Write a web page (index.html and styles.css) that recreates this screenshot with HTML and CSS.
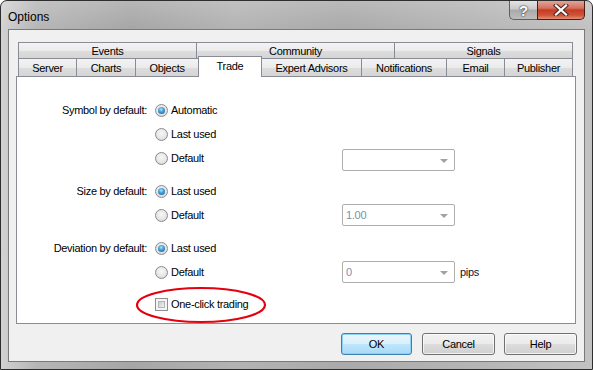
FILE: index.html
```html
<!DOCTYPE html>
<html>
<head>
<meta charset="utf-8">
<link rel="stylesheet" href="styles.css">
</head>
<body>
<div class="window">
  <div class="titlebar">
    <span class="title">Options</span>
    <div class="caption-btns">
      <div class="cbtn help">?</div>
      <div class="cbtn close">
        <svg width="16" height="12" viewBox="0 0 16 12">
          <path d="M3 1.5 L13 10.5 M13 1.5 L3 10.5" stroke="#4a2a25" stroke-width="4.2" stroke-linecap="square"/>
          <path d="M3 1.5 L13 10.5 M13 1.5 L3 10.5" stroke="#ffffff" stroke-width="2.2" stroke-linecap="square"/>
        </svg>
      </div>
    </div>
  </div>
  <div class="client">
    <div class="tabs">
      <div class="tabrow row1">
        <div class="tab first w-events">Events</div>
        <div class="tab w-community">Community</div>
        <div class="tab w-signals">Signals</div>
      </div>
      <div class="tabrow row2">
        <div class="tab first w-server">Server</div>
        <div class="tab w-charts">Charts</div>
        <div class="tab w-objects">Objects</div>
        <div class="tab selected w-trade">Trade</div>
        <div class="tab w-expert">Expert Advisors</div>
        <div class="tab w-notif">Notifications</div>
        <div class="tab w-email">Email</div>
        <div class="tab w-publisher">Publisher</div>
      </div>
      <div class="panel">
        <div class="group">
          <div class="lbl">Symbol by default:</div>
          <div class="opt"><span class="radio checked"></span><span>Automatic</span></div>
          <div></div><div></div>
          <div></div>
          <div class="opt"><span class="radio"></span><span>Last used</span></div>
          <div></div><div></div>
          <div></div>
          <div class="opt"><span class="radio"></span><span>Default</span></div>
          <div class="combo combo-low"><span class="combo-text"></span><span class="arrow"></span></div>
          <div></div>
        </div>
        <div class="group">
          <div class="lbl">Size by default:</div>
          <div class="opt"><span class="radio checked"></span><span>Last used</span></div>
          <div></div><div></div>
          <div></div>
          <div class="opt"><span class="radio"></span><span>Default</span></div>
          <div class="combo"><span class="combo-text">1.00</span><span class="arrow"></span></div>
          <div></div>
        </div>
        <div class="group">
          <div class="lbl">Deviation by default:</div>
          <div class="opt"><span class="radio checked"></span><span>Last used</span></div>
          <div></div><div></div>
          <div></div>
          <div class="opt"><span class="radio"></span><span>Default</span></div>
          <div class="combo"><span class="combo-text">0</span><span class="arrow"></span></div>
          <div class="unit">pips</div>
        </div>
        <div class="group last">
          <div></div>
          <div class="opt"><span class="check"></span><span>One-click trading</span></div>
          <div></div><div></div>
        </div>
      </div>
    </div>
    <div class="buttons">
      <div class="btn ok">OK</div>
      <div class="btn cancel">Cancel</div>
      <div class="btn helpbtn">Help</div>
    </div>
  </div>
  <svg class="annot" width="132" height="38" viewBox="0 0 132 38">
    <ellipse cx="66" cy="19" rx="64" ry="17" fill="none" stroke="#e3000f" stroke-width="2.2"/>
  </svg>
</div>
</body>
</html>
```
FILE: styles.css
```css
html, body {
  margin: 0;
  padding: 0;
  background: #ffffff;
}

.window {
  position: relative;
  width: 593px;
  height: 370px;
  box-sizing: border-box;
  border: 1px solid #2e2e2e;
  border-radius: 7px 7px 0 0;
  background:
    linear-gradient(180deg, rgba(255,255,255,0.18) 0px, rgba(255,255,255,0) 28px),
    linear-gradient(90deg, #d2d2d2 0%, #b6b6b6 6%, #a6a6a6 22%, #b3b3b3 40%, #aaaaaa 58%, #b5b5b5 80%, #c2c2c2 100%);
  display: flex;
  flex-direction: column;
  font-family: "Liberation Sans", Arial, sans-serif;
  font-size: 11px;
  letter-spacing: -0.3px;
  color: #000;
}

.titlebar {
  height: 28px;
  display: flex;
  justify-content: space-between;
  align-items: flex-start;
  padding: 0 7px 0 7px;
}

.title {
  font-size: 12px;
  letter-spacing: 0;
  margin-top: 9px;
  color: #000;
}

.caption-btns {
  display: flex;
}

.cbtn {
  height: 19px;
  box-sizing: border-box;
  border: 1px solid #5f5f5f;
  border-top: none;
  display: flex;
  align-items: center;
  justify-content: center;
}

.cbtn.help {
  width: 28px;
  border-radius: 0 0 0 5px;
  border-right: none;
  background: linear-gradient(180deg, #e4e4e4 0%, #c9c9c9 45%, #a9a9a9 50%, #bdbdbd 100%);
  color: #fff;
  font-size: 15px;
  font-weight: bold;
  text-shadow: 0 0 2px #333, 0 0 1px #222;
  letter-spacing: 0;
}

.cbtn.close {
  width: 48px;
  border-radius: 0 0 5px 0;
  border-color: #4b1c15;
  background: linear-gradient(180deg, #e3a597 0%, #d4705d 40%, #c23c22 50%, #d2553a 80%, #e2907a 100%);
}

.client {
  flex: 1;
  margin: 0 7px 7px 7px;
  border: 1px solid #7a7a7a;
  background: #f0f0f0;
  padding: 12px 0 0 7px;
  display: flex;
  flex-direction: column;
}

.tabs {
  margin-right: 8px;
  display: flex;
  flex-direction: column;
}

.tabrow {
  display: flex;
  margin: 0 2px;
}

.row1 { height: 16px; }
.row2 { height: 18px; }

.tab {
  box-sizing: border-box;
  border-top: 1px solid #898c95;
  border-right: 1px solid #898c95;
  background: linear-gradient(180deg, #f3f3f3 0%, #ebebeb 50%, #dddddd 51%, #d5d5d5 100%);
  display: flex;
  align-items: center;
  justify-content: center;
  white-space: nowrap;
}

.tab.first { border-left: 1px solid #898c95; }

.row1 .tab { height: 16px; padding-top: 0; }
.row2 .tab { height: 18px; padding-top: 1px; }

.w-events { width: 179px; }
.w-community { width: 198px; }
.w-signals { width: 178px; }
.w-server { width: 59px; }
.w-charts { width: 59px; }
.w-objects { width: 63px; }
.w-trade { width: 63px; }
.w-expert { width: 100px; }
.w-notif { width: 85px; }
.w-email { width: 58px; }
.w-publisher { width: 68px; }

.row2 .tab.selected {
  height: 21px;
  margin-top: -2px;
  margin-bottom: -1px;
  padding-top: 0;
  padding-bottom: 3px;
  background: #ffffff;
  border-left: 1px solid #898c95;
  margin-left: -1px;
  width: 64px;
  position: relative;
  z-index: 2;
}

.panel {
  height: 248px;
  box-sizing: border-box;
  border: 1px solid #898c95;
  background: #ffffff;
  padding-top: 21px;
}

.group {
  display: grid;
  grid-template-columns: 138px 187px 113px auto;
  grid-auto-rows: 24px;
  align-items: center;
}

.group + .group { margin-top: 9px; }
.group.last { margin-top: 8px; }

.lbl {
  text-align: right;
  padding-right: 8px;
  white-space: nowrap;
}

.opt {
  display: flex;
  align-items: center;
  gap: 3px;
  white-space: nowrap;
}

.radio {
  width: 13px;
  height: 13px;
  box-sizing: border-box;
  border-radius: 50%;
  border: 1px solid #8b8b8b;
  background: radial-gradient(circle at 50% 40%, #f8f8f8 0%, #e6e6e6 55%, #cdcdcd 100%);
  display: flex;
  align-items: center;
  justify-content: center;
}

.radio.checked::after {
  content: "";
  width: 7px;
  height: 7px;
  border-radius: 50%;
  background: radial-gradient(circle at 45% 35%, #a8e4ff 0%, #3d9ad6 45%, #125a92 100%);
}

.check {
  width: 13px;
  height: 13px;
  box-sizing: border-box;
  border: 1px solid #8e8f8f;
  background: #f4f4f4;
  padding: 2px;
  display: flex;
}

.check::after {
  content: "";
  flex: 1;
  background: linear-gradient(135deg, #cbcbcb 0%, #e2e2e2 60%, #f2f2f2 100%);
  border: 1px solid #b6b6b6;
}

.combo {
  height: 22px;
  box-sizing: border-box;
  border: 1px solid #adadad;
  border-radius: 2px;
  background: #ffffff;
  display: flex;
  align-items: center;
  justify-content: space-between;
  padding: 0 6px 0 3px;
}

.combo-low { position: relative; top: 2px; }

.combo-text {
  color: #7891ae;
}

.arrow {
  width: 0;
  height: 0;
  border-left: 4px solid transparent;
  border-right: 4px solid transparent;
  border-top: 4px solid #a2a2a2;
  margin-top: 1px;
}

.unit {
  padding-left: 5px;
  color: #111133;
}

.buttons {
  display: flex;
  justify-content: flex-end;
  margin-top: 9px;
  margin-right: 7px;
  gap: 9px;
}

.btn {
  height: 22px;
  box-sizing: border-box;
  border: 1px solid #707070;
  border-radius: 3px;
  background: linear-gradient(180deg, #f2f2f2 0%, #ebebeb 48%, #dddddd 52%, #cfcfcf 100%);
  display: flex;
  align-items: center;
  justify-content: center;
  box-shadow: inset 0 0 0 1px rgba(255,255,255,0.7);
}

.btn.ok {
  width: 71px;
  border-color: #3c7fb1;
  background: linear-gradient(180deg, #eaf6fd 0%, #d9f0fc 48%, #bee6fd 52%, #a7d9f5 100%);
  box-shadow: inset 0 0 0 1px #8fd0f5;
}

.btn.cancel { width: 73px; margin-left: 1px; }
.btn.helpbtn { width: 73px; }

.annot {
  position: absolute;
  left: 134px;
  top: 285px;
}
```
